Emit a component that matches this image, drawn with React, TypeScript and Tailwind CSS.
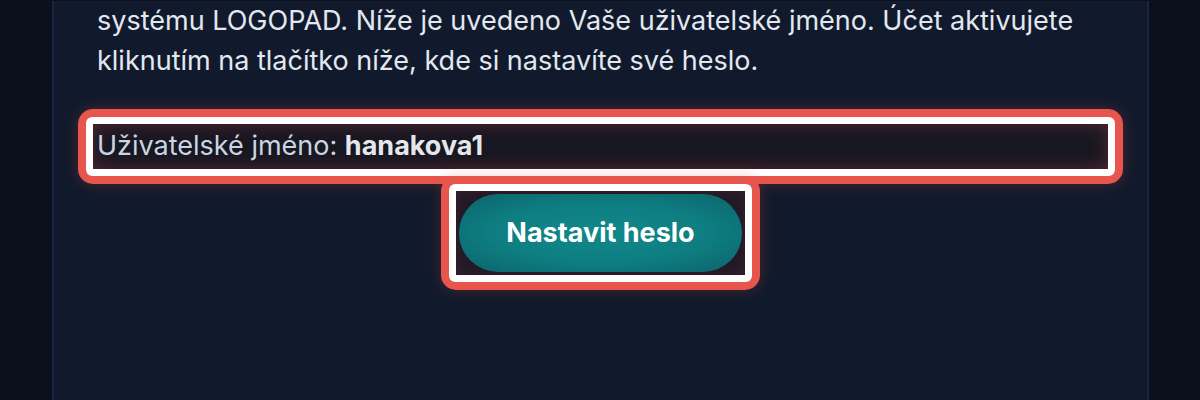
import type { ReactNode } from 'react';

// annotation ring drawn over a highlighted element
const Highlight = ({ children, className = '' }: { children: ReactNode; className?: string }) => {
  return (
    <div className={`relative ${className}`}>
      <div className="bg-[#171722] shadow-[inset_0_0_18px_rgba(229,83,75,0.3)]">{children}</div>
      <div className="pointer-events-none absolute -inset-[15px] rounded-[15px] border-[8px] border-[#e8554c] shadow-[0_0_14px_rgba(232,85,76,0.25)]">
        <div className="absolute inset-0 rounded-[6px] border-[7px] border-white" />
      </div>
    </div>
  );
};

const App = () => {
  return (
    <div className="h-[400px] w-[1200px] overflow-hidden bg-[#0b111c] font-['Inter','Liberation_Sans',sans-serif]">
      <div className="ml-[52px] h-full w-[1097px] border-x-2 border-[#1b2542] bg-[#111a2c] px-[43px]">
        <p className="mt-[1px] text-[27px] leading-[40px] text-[#e2e8f0]">
          systému LOGOPAD. Níže je uvedeno Vaše uživatelské jméno. Účet aktivujete
          <br />
          kliknutím na tlačítko níže, kde si nastavíte své heslo.
        </p>

        <Highlight className="-mx-1 mt-[43px]">
          <div className="flex h-[45px] items-center px-1 text-[27px] text-[#cbd5e1]">
            Uživatelské jméno:&nbsp;<strong className="font-bold text-[#e5e7eb]">hanakova1</strong>
          </div>
        </Highlight>

        <div className="mt-[22px] flex justify-center">
          <Highlight>
            <div className="bg-[#24192a]/60 p-[3px]">
              <button className="flex h-[78px] w-[283px] items-center justify-center rounded-full bg-[radial-gradient(ellipse_at_center,#10898c_0%,#0e7d81_55%,#0b636a_100%)] text-[27px] font-bold text-white">
                Nastavit heslo
              </button>
            </div>
          </Highlight>
        </div>
      </div>
    </div>
  );
};

export default App;
